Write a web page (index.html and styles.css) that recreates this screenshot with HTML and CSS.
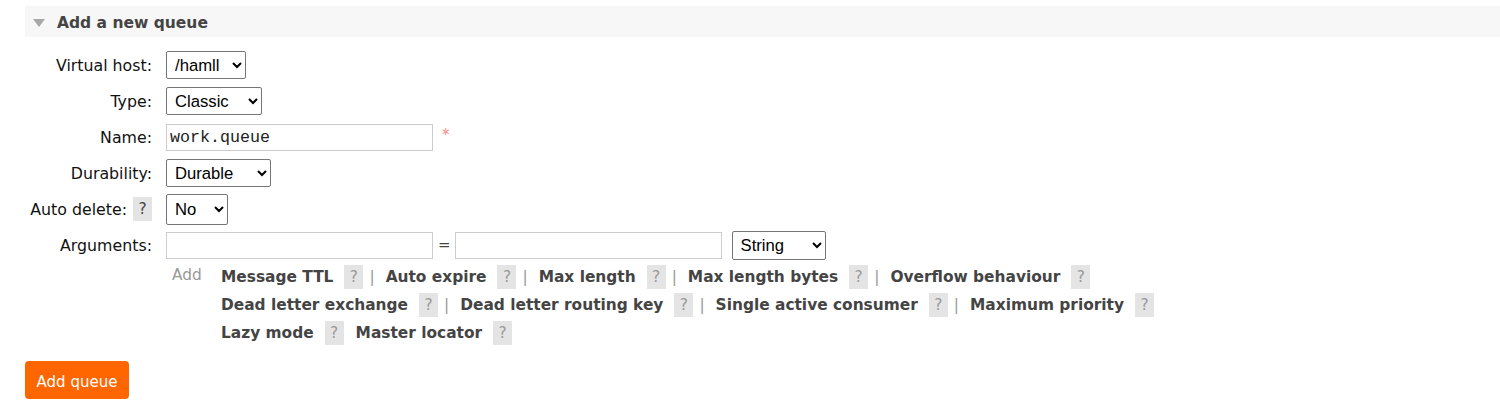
FILE: index.html
```html
<!DOCTYPE html>
<html>
<head>
<meta charset="utf-8">
<link rel="stylesheet" href="styles.css">
</head>
<body>
<div class="page">
  <div class="section-head">
    <span class="tri"></span>
    <h2>Add a new queue</h2>
  </div>
  <form class="form">
    <div class="row">
      <label class="lbl">Virtual host:</label>
      <select class="sel w-vhost"><option>/hamll</option></select>
    </div>
    <div class="row">
      <label class="lbl">Type:</label>
      <select class="sel w-type"><option>Classic</option></select>
    </div>
    <div class="row">
      <label class="lbl">Name:</label>
      <input class="txt mono" type="text" value="work.queue">
      <span class="req">*</span>
    </div>
    <div class="row">
      <label class="lbl">Durability:</label>
      <select class="sel w-dur"><option>Durable</option></select>
    </div>
    <div class="row">
      <label class="lbl">Auto delete: <span class="help dark">?</span></label>
      <select class="sel w-no"><option>No</option></select>
    </div>
    <div class="row">
      <label class="lbl">Arguments:</label>
      <input class="txt" type="text">
      <span class="eq">=</span>
      <input class="txt" type="text">
      <select class="sel w-str"><option>String</option></select>
    </div>
    <div class="addrow">
      <span class="add">Add</span>
      <div class="links">
        <div class="line">
          <span class="lk">Message TTL</span><span class="help">?</span><span class="sep">|</span>
          <span class="lk">Auto expire</span><span class="help">?</span><span class="sep">|</span>
          <span class="lk">Max length</span><span class="help">?</span><span class="sep">|</span>
          <span class="lk">Max length bytes</span><span class="help">?</span><span class="sep">|</span>
          <span class="lk">Overflow behaviour</span><span class="help">?</span>
        </div>
        <div class="line">
          <span class="lk">Dead letter exchange</span><span class="help">?</span><span class="sep">|</span>
          <span class="lk">Dead letter routing key</span><span class="help">?</span><span class="sep">|</span>
          <span class="lk">Single active consumer</span><span class="help">?</span><span class="sep">|</span>
          <span class="lk">Maximum priority</span><span class="help">?</span>
        </div>
        <div class="line">
          <span class="lk">Lazy mode</span><span class="help">?</span>
          <span class="lk gap">Master locator</span><span class="help">?</span>
        </div>
      </div>
    </div>
    <button type="button" class="btn">Add queue</button>
  </form>
</div>
</body>
</html>
```

FILE: styles.css
```css
* { box-sizing: border-box; }
html, body { margin: 0; padding: 0; background: #fff; }
body {
  font-family: "DejaVu Sans", Verdana, sans-serif;
  font-size: 15.8px;
  color: #111;
}
.page { padding: 6px 0 0 25px; }

.section-head {
  display: flex;
  align-items: center;
  height: 31px;
  background: #f7f7f7;
  padding-left: 8px;
}
.tri {
  width: 0; height: 0;
  border-left: 6.5px solid transparent;
  border-right: 6.5px solid transparent;
  border-top: 8px solid #a8a8a8;
  margin-right: 12px;
  margin-top: 3px;
}
.section-head h2 {
  margin: 0;
  margin-top: 2px;
  font-size: 15.5px;
  font-weight: bold;
  color: #444;
}

.form { padding-top: 14px; }
.row {
  display: flex;
  align-items: center;
  height: 28px;
  margin-bottom: 8px;
}
.lbl {
  width: 127px;
  text-align: right;
  margin-right: 14px;
  white-space: nowrap;
  color: #111;
  display: flex;
  justify-content: flex-end;
  align-items: center;
  gap: 6px;
}
.sel {
  height: 28px;
  font-family: "Liberation Sans", Arial, sans-serif;
  font-size: 16.67px;
  color: #000;
  border: 1px solid #767676;
  border-radius: 2px;
  background: #fff;
  padding: 0 2px 0 4px;
}
.w-vhost { width: 80px; }
.w-type { width: 96px; }
.w-dur { width: 105px; }
.w-no { width: 62px; height: 31px; }
.w-str { width: 94px; height: 29px; margin-left: 10px; }
.txt {
  width: 267px;
  height: 27px;
  border: 1px solid #ccc;
  border-radius: 0;
  padding: 0 3px;
  font-family: "Liberation Sans", Arial, sans-serif;
  font-size: 16.67px;
  color: #000;
  background: #fff;
}
.mono { font-family: "Liberation Mono", "Courier New", monospace; color: #222; }
.req {
  color: #f88;
  margin-left: 9px;
  align-self: flex-start;
  font-size: 15px;
  margin-top: 3px;
}
.eq { color: #444; margin: 0 4px 0 5px; font-size: 15px; }

.help {
  display: inline-flex;
  align-items: center;
  justify-content: center;
  width: 19px;
  height: 24px;
  background: #e4e4e4;
  color: #999;
  font-weight: normal;
  font-size: 15.4px;
}
.help.dark { color: #444; }

.addrow {
  display: flex;
  align-items: flex-start;
  padding-left: 147px;
  margin-top: -4px;
}
.add {
  color: #999;
  width: 49px;
  line-height: 28px;
  margin-top: -2px;
  font-size: 15.4px;
}
.links { display: flex; flex-direction: column; }
.line {
  display: flex;
  align-items: center;
  height: 28px;
  font-size: 15.4px;
}
.lk { font-weight: bold; color: #444; }
.line .help { margin-left: 11px; }
.sep { color: #999; margin: 0 11px 0 6px; }
.lk.gap { margin-left: 12px; }

.btn {
  margin-top: 14px;
  width: 104px;
  height: 38px;
  background: #f60;
  color: #fff;
  border: 0;
  border-radius: 4px;
  font-family: "DejaVu Sans", Verdana, sans-serif;
  font-size: 15px;
  padding: 3px 0 0 0;
}
```
